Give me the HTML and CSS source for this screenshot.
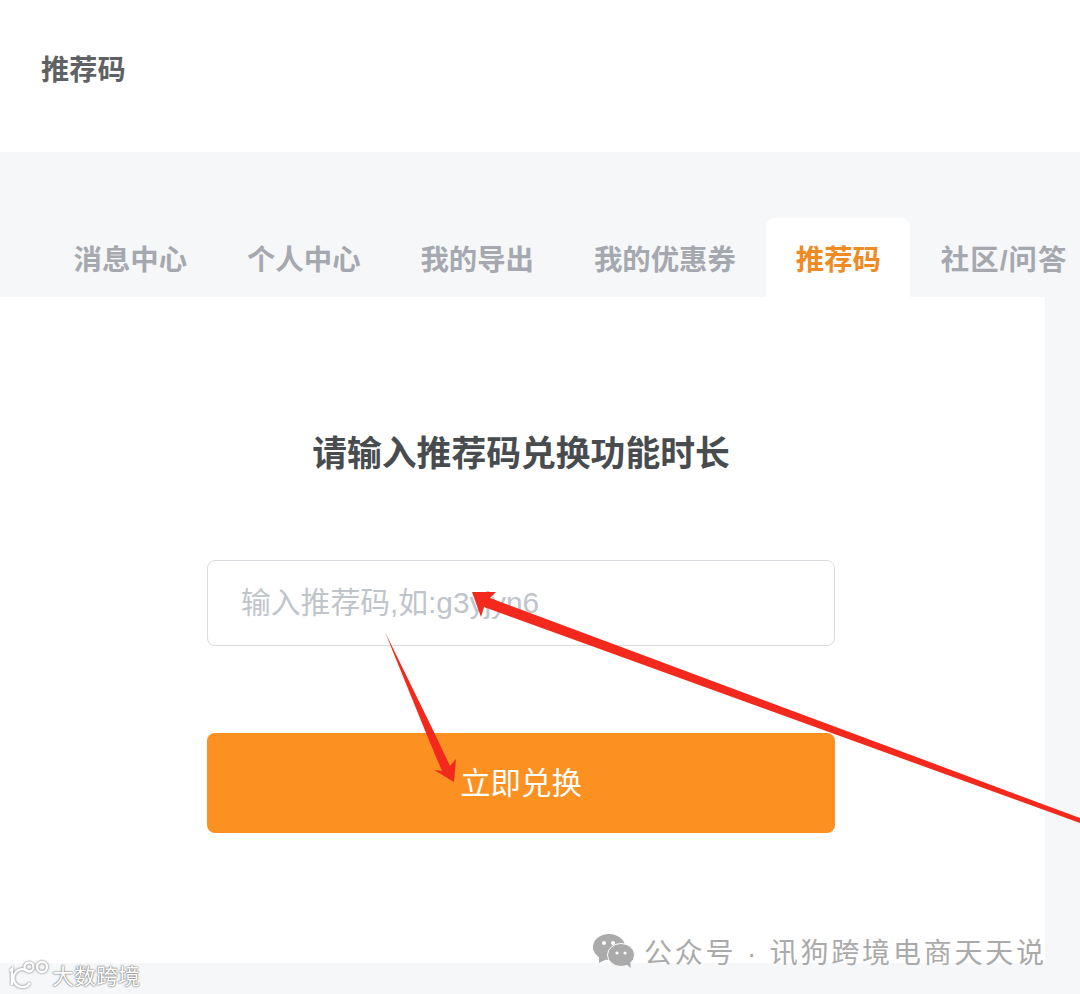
FILE: index.html
```html
<!DOCTYPE html>
<html>
<head>
  <title>推荐码</title>
  <link rel="stylesheet" href="styles.css">
</head>
<body>
  <div class="top-bar">
    <h2>推荐码</h2>
  </div>

  <div class="tabs">
    <a class="tab">消息中心</a>
    <a class="tab">个人中心</a>
    <a class="tab">我的导出</a>
    <a class="tab">我的优惠券</a>
    <a class="tab active">推荐码</a>
    <a class="tab tab-last">社区/问答</a>
  </div>

  <div class="panel">
    <h1>请输入推荐码兑换功能时长</h1>
    <input class="code-input" type="text" placeholder="输入推荐码,如:g3yjyn6" />
    <button class="submit">立即兑换</button>
  </div>

  <!-- red arrows drawn over the screenshot -->
  <svg class="arrows" width="1080" height="994" viewBox="0 0 1080 994">
    <polygon fill="#f2291c" points="472,592 496,592 490,598 1080,818 1080,823 484,607 481,617" />
    <polygon fill="#f2291c" points="385,632 434,732 450,766 456,759 454,782 434,770 442,771 426,733" />
  </svg>

  <div class="mark-left">
    <svg width="40" height="28" viewBox="0 0 40 28">
      <g fill="none" stroke="#fff" stroke-width="2.4">
        <path d="M1 11 L3 9 V25" />
        <path d="M20 12 A9 9 0 1 0 21 23" />
        <circle cx="20" cy="7" r="4.5" />
        <circle cx="33" cy="7" r="5" />
      </g>
    </svg>
    <span>大数跨境</span>
  </div>

  <div class="mark-right">
    <svg width="42" height="34" viewBox="0 0 42 34">
      <ellipse cx="16" cy="13" rx="16" ry="13" fill="#aaa" />
      <polygon points="6,22 6,29 14,25" fill="#aaa" />
      <ellipse cx="28" cy="21" rx="13.5" ry="11.5" fill="#aaa" stroke="#fff" stroke-width="1" />
      <polygon points="33,30 38,34 37,27" fill="#aaa" />
      <circle cx="11" cy="9" r="2" fill="#fff" />
      <circle cx="20" cy="9" r="2" fill="#fff" />
      <circle cx="24" cy="19" r="1.6" fill="#fff" />
      <circle cx="32" cy="19" r="1.6" fill="#fff" />
    </svg>
    <span>公众号 · 讯狗跨境电商天天说</span>
  </div>
</body>
</html>
```

FILE: styles.css
```css
body, html {
  height: 100%;
  margin: 0;
}

body {
  position: relative;
  overflow: hidden;
  background: #f6f7f9;
  font-family: "Liberation Sans", "Noto Sans CJK SC", sans-serif;
}

.top-bar {
  display: flex;
  align-items: center;
  height: 152px;
  padding: 0 0 18px 41px;
  box-sizing: border-box;
  background: #fff;
}

.top-bar h2 {
  margin: 0;
  font-size: 28.2px;
  font-weight: 700;
  color: #5e6265;
}

.tabs {
  display: flex;
  gap: 0.9px;
  height: 79px;
  margin-top: 66px;
  padding-left: 44px;
}

.tab {
  display: flex;
  align-items: center;
  padding: 0 29.5px;
  box-sizing: border-box;
  font-size: 28.4px;
  font-weight: 700;
  color: #a5a8ae;
  white-space: nowrap;
  border-radius: 8px 8px 0 0;
}

.tab.active {
  background: #fff;
  color: #ee8b25;
}

.tab-last {
  letter-spacing: 1px;
}

.panel {
  display: flex;
  flex-direction: column;
  align-items: center;
  width: 1045px;
  height: 666px;
  padding-right: 3px;
  box-sizing: border-box;
  background: #fff;
}

.panel h1 {
  margin: 133px 0 0;
  height: 46px;
  line-height: 47px;
  font-size: 34.8px;
  font-weight: 700;
  color: #484c4f;
}

.code-input {
  width: 628px;
  height: 86px;
  margin-top: 84px;
  padding: 0 33px;
  box-sizing: border-box;
  border: 1px solid #d8dbe0;
  border-radius: 8px;
  background: #fff;
  font-family: inherit;
  font-size: 29.8px;
}

.code-input::placeholder {
  color: #c0c4cb;
  opacity: 1;
}

.submit {
  width: 628px;
  height: 100px;
  margin-top: 87px;
  padding: 0 0 4px;
  border: 0;
  border-radius: 8px;
  background: #fc9020;
  color: #fff;
  font-family: inherit;
  font-size: 30.4px;
}

.arrows {
  position: absolute;
  left: 0;
  top: 0;
}

.mark-left {
  position: absolute;
  left: 9px;
  top: 958px;
  display: flex;
  align-items: center;
  gap: 3px;
  color: #fff;
  font-size: 22px;
  text-shadow: 0 0 2px #666, 0 0 1px #666;
}

.mark-left svg {
  filter: drop-shadow(0 0 1px #666);
}

.mark-right {
  position: absolute;
  left: 593px;
  top: 931px;
  display: flex;
  align-items: center;
  gap: 9px;
  color: #aaa;
  font-size: 28px;
  letter-spacing: 2.8px;
  white-space: nowrap;
}
```
